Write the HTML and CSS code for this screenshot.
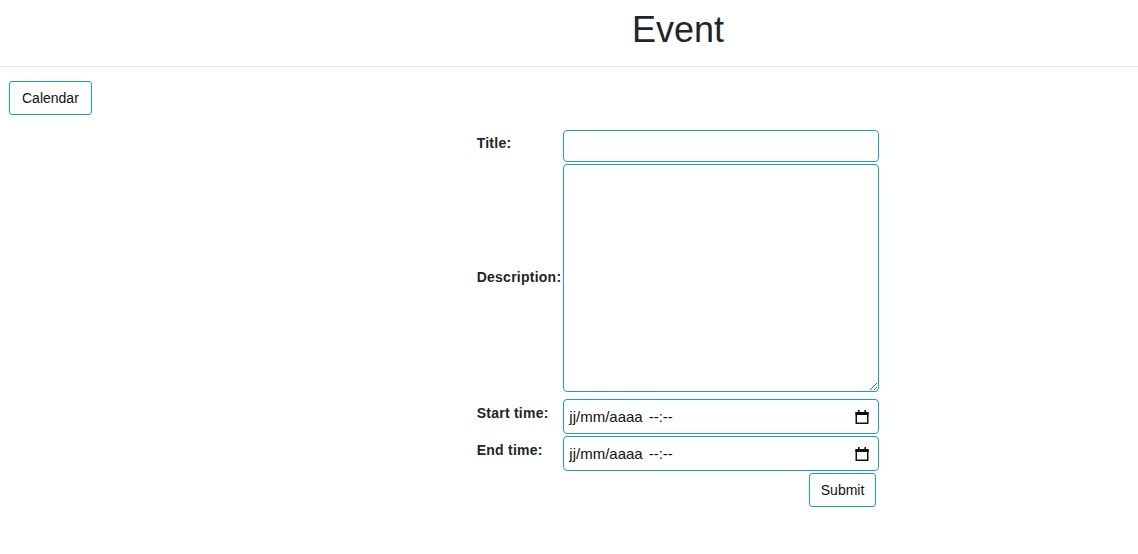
FILE: index.html
```html
<!DOCTYPE html>
<html lang="fr">
<head>
<meta charset="utf-8">
<title>Event</title>
<link rel="stylesheet" href="styles.css">
</head>
<body>
<header class="page-header">
  <h1 class="page-title">Event</h1>
</header>
<div class="toolbar">
  <button class="btn btn-wide" type="button">Calendar</button>
</div>
<main class="content">
  <form class="event-form">
    <table class="form-table">
      <tr>
        <td class="label-cell"><label class="form-label">Title:</label></td>
        <td><input class="control text-input" type="text"></td>
      </tr>
      <tr>
        <td class="label-cell"><label class="form-label">Description:</label></td>
        <td><textarea class="control text-area"></textarea></td>
      </tr>
      <tr>
        <td class="label-cell"><label class="form-label">Start time:</label></td>
        <td>
          <div class="control date-input">
            <span class="date-text">jj/mm/aaaa</span><span class="time-text">--:--</span>
            <svg class="cal-icon" viewBox="0 0 16 16" width="16" height="16" aria-hidden="true">
              <rect x="4" y="1" width="1.6" height="3" fill="#111"/>
              <rect x="10.4" y="1" width="1.6" height="3" fill="#111"/>
              <rect x="1.5" y="3" width="13" height="3" fill="#111"/>
              <rect x="2.25" y="3.75" width="11.5" height="10.5" fill="none" stroke="#111" stroke-width="1.5"/>
            </svg>
          </div>
        </td>
      </tr>
      <tr>
        <td class="label-cell"><label class="form-label">End time:</label></td>
        <td>
          <div class="control date-input">
            <span class="date-text">jj/mm/aaaa</span><span class="time-text">--:--</span>
            <svg class="cal-icon" viewBox="0 0 16 16" width="16" height="16" aria-hidden="true">
              <rect x="4" y="1" width="1.6" height="3" fill="#111"/>
              <rect x="10.4" y="1" width="1.6" height="3" fill="#111"/>
              <rect x="1.5" y="3" width="13" height="3" fill="#111"/>
              <rect x="2.25" y="3.75" width="11.5" height="10.5" fill="none" stroke="#111" stroke-width="1.5"/>
            </svg>
          </div>
        </td>
      </tr>
      <tr>
        <td></td>
        <td class="submit-cell"><button class="btn" type="submit">Submit</button></td>
      </tr>
    </table>
  </form>
</main>
</body>
</html>
```
FILE: styles.css
```css
* { box-sizing: border-box; }

html, body {
  margin: 0;
  padding: 0;
  background: #fff;
  color: #212529;
  font-family: "Liberation Sans", Arial, sans-serif;
}

.page-header {
  padding: 8px 0 15px 218px;
  border-bottom: 1px solid #e6e6e6;
  text-align: center;
}

.page-title {
  margin: 0;
  font-size: 36px;
  font-weight: 400;
  line-height: 43px;
  color: #212529;
}

.toolbar {
  padding: 14px 0 0 9px;
}

.btn {
  display: inline-block;
  font-family: "Liberation Sans", Arial, sans-serif;
  font-size: 14px;
  line-height: 20px;
  padding: 6px 11px;
  height: 34px;
  color: #111;
  background: #fff;
  border: 1px solid #17a2b8;
  border-radius: 3px;
  cursor: pointer;
}

.btn-wide {
  padding: 6px 12px;
}

.content {
  padding-left: 218px;
  padding-top: 13px;
}

.event-form {
  margin: 0;
}

.form-table {
  margin: 0 auto;
  border-collapse: separate;
  border-spacing: 2px;
}

.form-table td {
  padding: 0;
  vertical-align: middle;
}

.label-cell {
  text-align: left;
}

.form-label {
  display: inline-block;
  font-size: 14px;
  font-weight: 700;
  letter-spacing: 0.25px;
  color: #212529;
  margin-bottom: 8px;
}

.control {
  display: block;
  width: 316px;
  border: 1px solid #17a2b8;
  border-radius: 4px;
  background: #fff;
  font-family: "Liberation Sans", Arial, sans-serif;
}

.text-input {
  height: 32px;
  padding: 0 6px;
  font-size: 15px;
}

.text-area {
  height: 228px;
  resize: vertical;
  margin-bottom: 5px;
  padding: 4px 6px;
  font-size: 15px;
}

.date-input {
  height: 35px;
  display: flex;
  align-items: center;
  padding: 0 8px 0 5px;
  font-size: 15px;
  color: #111;
}

.date-text {
  margin-right: 6px;
}

.time-text {
  flex: 1;
}

.cal-icon {
  display: block;
  width: 16px;
  height: 16px;
}

.submit-cell {
  text-align: right;
  padding-right: 3px !important;
}
```
